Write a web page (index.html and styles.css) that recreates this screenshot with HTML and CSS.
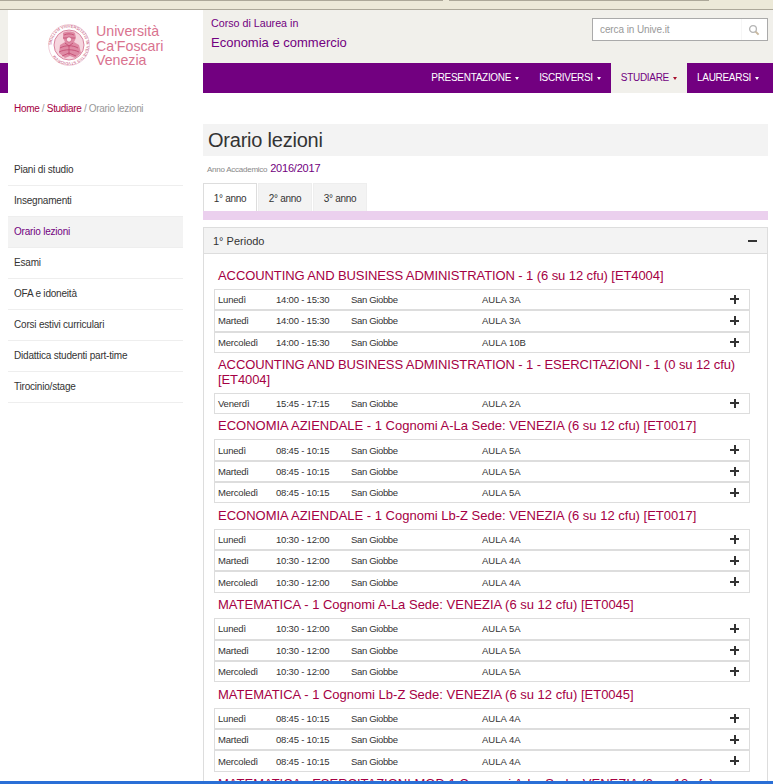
FILE: index.html
```html
<!DOCTYPE html>
<html lang="it">
<head>
<meta charset="utf-8">
<title>Orario lezioni</title>
<link rel="stylesheet" href="styles.css">
</head>
<body>
<div class="chrome"><span class="chrome-a"></span><span class="chrome-b"></span></div>
<header class="site-head">
  <a class="brand">
    <svg class="seal" viewBox="0 0 42 42" width="42" height="42">
      <defs><path id="sealring" d="M21 21m-17.4 0a17.4 17.4 0 1 1 34.8 0a17.4 17.4 0 1 1-34.8 0"/></defs>
      <circle cx="21" cy="21" r="20.4" fill="none" stroke="#e6adbf" stroke-width=".6"/>
      <circle cx="21" cy="21" r="15" fill="#f6d5de" stroke="#cf6b8b" stroke-width=".8"/>
      <text class="seal-text"><textPath href="#sealring">SIGILLVM VNIVERSITATIS IN VENETIIS STVDIORVM</textPath></text>
      <path d="M15 9c3-2 9-2 12 0l1 5-2 4 5 3 2 8-6 5-5-2-5 2-6-5 1-8 5-3-2-4z" fill="#df8ba5"/>
      <path d="M16 11c3-1.500 7-1.500 10 0M15 14h12M12 24c5-3 13-3 18 0M11 28c6-3 14-3 20 0M14 32l7-3 7 3M17 19l4 3 4-3M21 22v9" fill="none" stroke="#c2486f" stroke-width=".8"/>
      <circle cx="21" cy="15.500" r="2.600" fill="#fbe6ec" stroke="#c2486f" stroke-width=".6"/>
    </svg>
    <span class="brand-name">Università<br>Ca'Foscari<br>Venezia</span>
  </a>
  <div class="head-main">
    <div class="head-top">
      <div class="course">
        <p class="course-kicker">Corso di Laurea in</p>
        <p class="course-name">Economia e commercio</p>
      </div>
      <form class="search">
        <span class="search-text">cerca in Unive.it</span>
        <span class="search-btn">
          <svg viewBox="0 0 12 12" width="12" height="12"><circle cx="5" cy="5" r="3.4" fill="none" stroke="#b5b5b5" stroke-width="1.3"/><path d="M7.6 7.6l3 3" stroke="#c9b9a0" stroke-width="2"/></svg>
        </span>
      </form>
    </div>
    <nav class="nav">
      <a class="nav-item">Presentazione<i class="caret"></i></a>
      <a class="nav-item">Iscriversi<i class="caret"></i></a>
      <a class="nav-item is-active">Studiare<i class="caret"></i></a>
      <a class="nav-item">Laurearsi<i class="caret"></i></a>
    </nav>
  </div>
</header>
<p class="crumbs"><a>Home</a> / <a>Studiare</a> / Orario lezioni</p>
<div class="layout">
  <aside class="side">
    <a class="side-item">Piani di studio</a>
    <a class="side-item">Insegnamenti</a>
    <a class="side-item is-active">Orario lezioni</a>
    <a class="side-item">Esami</a>
    <a class="side-item">OFA e idoneità</a>
    <a class="side-item">Corsi estivi curriculari</a>
    <a class="side-item">Didattica studenti part-time</a>
    <a class="side-item">Tirocinio/stage</a>
  </aside>
  <main class="content">
    <h1 class="title">Orario lezioni</h1>
    <p class="year"><span class="year-label">Anno Accademico</span> <a>2016/2017</a></p>
    <div class="tabs">
      <a class="tab is-active">1° anno</a>
      <a class="tab">2° anno</a>
      <a class="tab">3° anno</a>
    </div>
    <div class="tab-line"></div>
    <section class="panel">
      <div class="panel-head"><span>1° Periodo</span><b class="sign minus"></b></div>
      <div class="panel-body">
        <h2 class="course-title is-tight">ACCOUNTING AND BUSINESS ADMINISTRATION - 1 (6 su 12 cfu) [ET4004]</h2>
        <div class="row"><span class="c-day">Lunedì</span><span class="c-time">14:00 - 15:30</span><span class="c-place">San Giobbe</span><span class="c-room">AULA 3A</span><b class="sign plus"></b></div>
        <div class="row"><span class="c-day">Martedì</span><span class="c-time">14:00 - 15:30</span><span class="c-place">San Giobbe</span><span class="c-room">AULA 3A</span><b class="sign plus"></b></div>
        <div class="row"><span class="c-day">Mercoledì</span><span class="c-time">14:00 - 15:30</span><span class="c-place">San Giobbe</span><span class="c-room">AULA 10B</span><b class="sign plus"></b></div>

        <h2 class="course-title is-tight">ACCOUNTING AND BUSINESS ADMINISTRATION - 1 - ESERCITAZIONI - 1 (0 su 12 cfu) [ET4004]</h2>
        <div class="row"><span class="c-day">Venerdì</span><span class="c-time">15:45 - 17:15</span><span class="c-place">San Giobbe</span><span class="c-room">AULA 2A</span><b class="sign plus"></b></div>

        <h2 class="course-title">ECONOMIA AZIENDALE - 1 Cognomi A-La Sede: VENEZIA (6 su 12 cfu) [ET0017]</h2>
        <div class="row"><span class="c-day">Lunedì</span><span class="c-time">08:45 - 10:15</span><span class="c-place">San Giobbe</span><span class="c-room">AULA 5A</span><b class="sign plus"></b></div>
        <div class="row"><span class="c-day">Martedì</span><span class="c-time">08:45 - 10:15</span><span class="c-place">San Giobbe</span><span class="c-room">AULA 5A</span><b class="sign plus"></b></div>
        <div class="row"><span class="c-day">Mercoledì</span><span class="c-time">08:45 - 10:15</span><span class="c-place">San Giobbe</span><span class="c-room">AULA 5A</span><b class="sign plus"></b></div>

        <h2 class="course-title">ECONOMIA AZIENDALE - 1 Cognomi Lb-Z Sede: VENEZIA (6 su 12 cfu) [ET0017]</h2>
        <div class="row"><span class="c-day">Lunedì</span><span class="c-time">10:30 - 12:00</span><span class="c-place">San Giobbe</span><span class="c-room">AULA 4A</span><b class="sign plus"></b></div>
        <div class="row"><span class="c-day">Martedì</span><span class="c-time">10:30 - 12:00</span><span class="c-place">San Giobbe</span><span class="c-room">AULA 4A</span><b class="sign plus"></b></div>
        <div class="row"><span class="c-day">Mercoledì</span><span class="c-time">10:30 - 12:00</span><span class="c-place">San Giobbe</span><span class="c-room">AULA 4A</span><b class="sign plus"></b></div>

        <h2 class="course-title">MATEMATICA - 1 Cognomi A-La Sede: VENEZIA (6 su 12 cfu) [ET0045]</h2>
        <div class="row"><span class="c-day">Lunedì</span><span class="c-time">10:30 - 12:00</span><span class="c-place">San Giobbe</span><span class="c-room">AULA 5A</span><b class="sign plus"></b></div>
        <div class="row"><span class="c-day">Martedì</span><span class="c-time">10:30 - 12:00</span><span class="c-place">San Giobbe</span><span class="c-room">AULA 5A</span><b class="sign plus"></b></div>
        <div class="row"><span class="c-day">Mercoledì</span><span class="c-time">10:30 - 12:00</span><span class="c-place">San Giobbe</span><span class="c-room">AULA 5A</span><b class="sign plus"></b></div>

        <h2 class="course-title">MATEMATICA - 1 Cognomi Lb-Z Sede: VENEZIA (6 su 12 cfu) [ET0045]</h2>
        <div class="row"><span class="c-day">Lunedì</span><span class="c-time">08:45 - 10:15</span><span class="c-place">San Giobbe</span><span class="c-room">AULA 4A</span><b class="sign plus"></b></div>
        <div class="row"><span class="c-day">Martedì</span><span class="c-time">08:45 - 10:15</span><span class="c-place">San Giobbe</span><span class="c-room">AULA 4A</span><b class="sign plus"></b></div>
        <div class="row"><span class="c-day">Mercoledì</span><span class="c-time">08:45 - 10:15</span><span class="c-place">San Giobbe</span><span class="c-room">AULA 4A</span><b class="sign plus"></b></div>

        <h2 class="course-title">MATEMATICA - ESERCITAZIONI MOD.1 Cognomi A-La Sede: VENEZIA (9 su 12 cfu)</h2>
      </div>
    </section>
  </main>
</div>
<div class="taskbar"></div>
</body>
</html>
```
FILE: styles.css
```css
html, body { margin: 0; padding: 0; height: 784px; overflow: hidden; background: #fff; }
body { font-family: "Liberation Sans", Arial, sans-serif; font-size: 10px; color: #333; position: relative; }
p, h1, h2 { margin: 0; font-weight: normal; }
a { color: inherit; text-decoration: none; }

.chrome { height: 9px; background: #ece9d8; border-bottom: 1px solid #aca899; display: flex; }
.chrome-a { width: 443px; height: 1px; background: #aca899; }
.chrome-b { width: 260px; height: 1px; background: #aca899; margin-left: 6px; }

.site-head { display: flex; height: 83px; background: linear-gradient(#f1f0eb 53px, #720080 53px); }
.brand { width: 195px; margin-left: 8px; background: #fff; display: flex; align-items: flex-start; padding: 14px 0 0 40px; box-sizing: border-box; }
.seal { display: block; flex: none; }
.seal-text { font-size: 4px; fill: #c2486f; font-family: "Liberation Sans", sans-serif; }
.brand-name { margin-left: 6px; font-size: 14.2px; line-height: 14.6px; color: #d9738f; }
.head-main { flex: 1; display: flex; flex-direction: column; }
.head-top { height: 53px; display: flex; justify-content: space-between; align-items: flex-start; padding: 0 5px 0 8px; }
.course { color: #720080; padding-top: 6px; }
.course-kicker { font-size: 10.7px; line-height: 14px; }
.course-name { font-size: 13px; line-height: 16px; margin-top: 5px; }
.search { margin-top: 8px; width: 176px; height: 23px; box-sizing: border-box; border: 1px solid #aaa; background: #fff; display: flex; justify-content: space-between; align-items: center; }
.search-text { color: #999; font-size: 10px; padding-left: 7px; letter-spacing: -.1px; }
.search-btn { width: 23px; height: 21px; display: flex; align-items: center; justify-content: center; border-left: 1px solid #f6f6f6; padding-right: 2px; }
.nav { height: 30px; display: flex; justify-content: flex-end; padding-right: 4px; }
.nav-item { display: flex; align-items: center; padding: 0 10px 2px; color: #fff; text-transform: uppercase; font-size: 10px; letter-spacing: -.3px; }
.nav-item.is-active { background: #f1f0eb; color: #720080; }
.caret { width: 0; height: 0; margin-left: 4px; margin-top: 2px; border: 2.5px solid transparent; border-top: 3px solid #fff; border-bottom: 0; }
.is-active .caret { border-top-color: #a8102c; }

.crumbs { padding: 10px 0 0 14px; height: 21px; line-height: 12px; color: #999; font-size: 10px; letter-spacing: -.32px; }
.crumbs a { color: #a50044; }

.layout { display: flex; gap: 20px; padding: 0 5px 0 8px; }
.side { width: 175px; padding-top: 30px; flex: none; }
.side-item { display: block; height: 31px; box-sizing: border-box; line-height: 30px; padding-left: 6px; border-bottom: 1px solid #eee; font-size: 10px; color: #333; letter-spacing: -.2px; }
.side-item:first-child { height: 32px; line-height: 31px; }
.side-item.is-active { background: #f3f3f3; color: #720080; }

.content { flex: 1; min-width: 0; }
.title { height: 32px; line-height: 32px; background: #f3f3f3; padding-left: 5px; font-size: 20px; color: #333; letter-spacing: -.22px; }
.year { height: 27px; line-height: 25px; padding-left: 4px; color: #720080; font-size: 11px; letter-spacing: -.2px; }
.year-label { font-size: 8px; color: #888; letter-spacing: -.25px; }
.tabs { display: flex; gap: 1px; height: 28px; }
.tab { width: 54px; background: #f3f3f3; border: 1px solid #eee; border-bottom: 0; text-align: center; line-height: 30px; box-sizing: border-box; letter-spacing: -.3px; }
.tab.is-active { background: #fff; border-color: #ddd; }
.tab-line { height: 9px; background: #ebd0ee; margin-bottom: 7px; }

.panel { border: 1px solid #ddd; }
.panel-head { height: 26px; background: #f3f3f3; border-bottom: 1px solid #ddd; display: flex; justify-content: space-between; align-items: center; padding: 0 10px 0 9px; font-size: 11px; color: #333; box-sizing: border-box; }
.panel-body { padding: 9.4px 17px 0 10px; }
.course-title { font-size: 13px; line-height: 14.2px; color: #a50044; padding: 5.6px 0 5.7px 4px; }
.course-title.is-tight { letter-spacing: -.09px; }
.row { height: 21.33px; box-sizing: border-box; border: 1px solid #ddd; position: relative; display: flex; align-items: center; padding-left: 3px; font-size: 9.5px; color: #333; }
.c-day { width: 58px; letter-spacing: -.2px; }
.c-time { width: 75px; letter-spacing: -.2px; }
.c-place { width: 131px; letter-spacing: -.35px; }
.sign { display: block; position: relative; width: 9px; height: 9px; }
.row .sign { position: absolute; right: 10px; top: 5px; }
.sign::before { content: ""; position: absolute; left: 0; right: 0; top: 3.5px; height: 2px; background: #333; }
.plus::after { content: ""; position: absolute; top: 0; bottom: 0; left: 3.5px; width: 2px; background: #333; }
.taskbar { position: absolute; left: 0; right: 0; top: 781px; height: 3px; background: #2a6fd6; }
```
